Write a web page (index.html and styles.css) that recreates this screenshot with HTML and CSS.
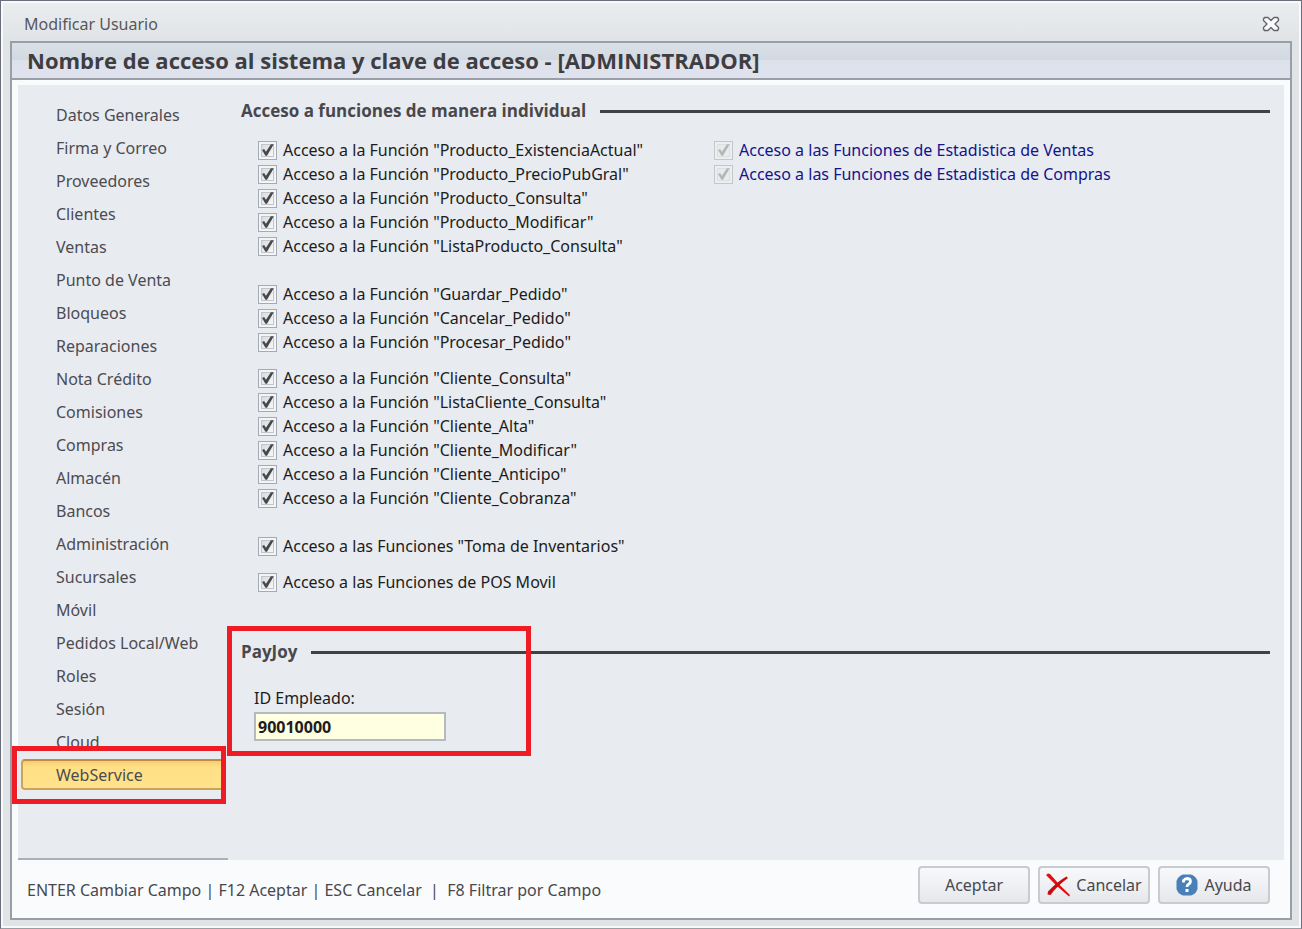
FILE: index.html
```html
<!DOCTYPE html>
<html lang="es">
<head>
    <meta charset="UTF-8">
    <meta name="viewport" content="width=device-width, initial-scale=1.0">
    <title>Modificar Usuario</title>
    <link rel="stylesheet" href="styles.css">
</head>
<body>
    <div class="window">
        <div class="title-bar">
            <span>Modificar Usuario</span>
            <button class="close" aria-label="Cerrar">
                <svg width="18" height="16" viewBox="0 0 18 16">
                    <path d="M2.500 1.500h3.500l3 3 3-3h3.500l1 1.500v1.500L13 8l3.500 3.500V13l-1 1.500H12l-3-3-3 3H2.500l-1-1.500v-1.500L5 8 1.500 4.500V3z" fill="#fafafa" stroke="#62666b" stroke-width="1.400" stroke-linejoin="round"/>
                </svg>
            </button>
        </div>

        <div class="panel">
            <h1>Nombre de acceso al sistema y clave de acceso - [ADMINISTRADOR]</h1>

            <div class="content">
                <nav class="sidebar">
                    <button>Datos Generales</button>
                    <button>Firma y Correo</button>
                    <button>Proveedores</button>
                    <button>Clientes</button>
                    <button>Ventas</button>
                    <button>Punto de Venta</button>
                    <button>Bloqueos</button>
                    <button>Reparaciones</button>
                    <button>Nota Crédito</button>
                    <button>Comisiones</button>
                    <button>Compras</button>
                    <button>Almacén</button>
                    <button>Bancos</button>
                    <button>Administración</button>
                    <button>Sucursales</button>
                    <button>Móvil</button>
                    <button>Pedidos Local/Web</button>
                    <button>Roles</button>
                    <button>Sesión</button>
                    <button>Cloud</button>
                    <div class="marked">
                        <button class="active">WebService</button>
                        <div class="highlight highlight-tab"></div>
                    </div>
                </nav>

                <main>
                    <section>
                        <h2>Acceso a funciones de manera individual</h2>
                        <div class="columns">
                            <div class="column">
                                <div class="group">
                                    <label><input type="checkbox" checked>Acceso a la Función "Producto_ExistenciaActual"</label>
                                    <label><input type="checkbox" checked>Acceso a la Función "Producto_PrecioPubGral"</label>
                                    <label><input type="checkbox" checked>Acceso a la Función "Producto_Consulta"</label>
                                    <label><input type="checkbox" checked>Acceso a la Función "Producto_Modificar"</label>
                                    <label><input type="checkbox" checked>Acceso a la Función "ListaProducto_Consulta"</label>
                                </div>
                                <div class="group group-far">
                                    <label><input type="checkbox" checked>Acceso a la Función "Guardar_Pedido"</label>
                                    <label><input type="checkbox" checked>Acceso a la Función "Cancelar_Pedido"</label>
                                    <label><input type="checkbox" checked>Acceso a la Función "Procesar_Pedido"</label>
                                </div>
                                <div class="group group-near">
                                    <label><input type="checkbox" checked>Acceso a la Función "Cliente_Consulta"</label>
                                    <label><input type="checkbox" checked>Acceso a la Función "ListaCliente_Consulta"</label>
                                    <label><input type="checkbox" checked>Acceso a la Función "Cliente_Alta"</label>
                                    <label><input type="checkbox" checked>Acceso a la Función "Cliente_Modificar"</label>
                                    <label><input type="checkbox" checked>Acceso a la Función "Cliente_Anticipo"</label>
                                    <label><input type="checkbox" checked>Acceso a la Función "Cliente_Cobranza"</label>
                                </div>
                                <div class="group group-far">
                                    <label><input type="checkbox" checked>Acceso a las Funciones "Toma de Inventarios"</label>
                                </div>
                                <div class="group group-near">
                                    <label><input type="checkbox" checked>Acceso a las Funciones de POS Movil</label>
                                </div>
                            </div>
                            <div class="column stats">
                                <label><input type="checkbox" checked disabled>Acceso a las Funciones de Estadistica de Ventas</label>
                                <label><input type="checkbox" checked disabled>Acceso a las Funciones de Estadistica de Compras</label>
                            </div>
                        </div>
                    </section>

                    <section class="payjoy">
                        <h2>PayJoy</h2>
                        <div class="field">
                            <label for="id-empleado">ID Empleado:</label>
                            <input type="text" id="id-empleado" value="90010000">
                        </div>
                        <div class="highlight highlight-payjoy"></div>
                    </section>
                </main>
            </div>

            <footer>
                <p>ENTER Cambiar Campo | F12 Aceptar | ESC Cancelar &nbsp;|&nbsp; F8 Filtrar por Campo</p>
                <div class="actions">
                    <button>Aceptar</button>
                    <button>
                        <svg width="24" height="24" viewBox="0 0 24 24">
                            <path d="M0 2L2 .5 4 1Q13 12 24 22l-1 1.500Q11 14 0 2z" fill="#e01010"/>
                            <path d="M20.500 3.500L22 5Q11 13 4.500 22L1.500 21.500 2 18.500Q12 8 20.500 3.500z" fill="#c80c0c"/>
                        </svg>
                        Cancelar
                    </button>
                    <button>
                        <svg width="22" height="22" viewBox="0 0 22 22">
                            <path d="M7 .5h8Q20 2 21.500 7v8Q20 20 15 21.500H7Q2 20 .5 15V7Q2 2 7 .5z" fill="#4a80b9"/>
                            <path d="M7.500 8.500V6.500Q9 4.500 11.500 4.500 14.500 4.800 14.500 7.500 14.500 9.300 12.500 10.300 11 11 11 13" fill="none" stroke="#fff" stroke-width="2.800"/>
                            <path d="M9.500 15h3v3h-3z" fill="#fff"/>
                        </svg>
                        Ayuda
                    </button>
                </div>
            </footer>
        </div>
    </div>
</body>
</html>
```
FILE: styles.css
```css
* {
    box-sizing: border-box;
}
body {
    margin: 0;
    font-family: "Noto Sans", "Open Sans", sans-serif;
    font-size: 16px;
    line-height: 24px;
    color: #1c1c20;
}
h1, h2, p {
    margin: 0;
}
h1, h2 {
    font-family: "Open Sans", "Noto Sans", sans-serif;
}
button, input {
    margin: 0;
    font-family: inherit;
    font-size: inherit;
}

/* Window frame */
.window {
    display: flex;
    flex-direction: column;
    min-height: 100vh;
    padding: 0 9px 8px;
    border: 1px solid #6a6f7b;
    border-bottom-color: #9a9da2;
    box-shadow: inset 0 0 0 2px #f8f9fa;
    background: linear-gradient(#ebedf0, #e0e4e6 40px);
}
.title-bar {
    display: flex;
    justify-content: space-between;
    align-items: center;
    height: 40px;
    padding: 6px 12px 0 14px;
    color: #57575b;
}
.close {
    display: flex;
    padding: 0;
    border: none;
    background: none;
}
.panel {
    display: flex;
    flex: 1;
    flex-direction: column;
    border: 2px solid #9a9fa7;
    background: #fafbfd;
}
h1 {
    padding: 0 15px;
    border-bottom: 2px solid #9a9fa7;
    background: linear-gradient(#dae0e8, #d1d9e1 50%, #dde1ea 50%, #e0e3ee);
    color: #3e3e42;
    font-size: 22px;
    line-height: 35px;
}

/* Tabs and page */
.content {
    display: flex;
    flex: 1;
    margin: 5px 6px 0;
    background: #e8ebf0;
}
.sidebar {
    display: flex;
    flex-direction: column;
    gap: 2px;
    width: 210px;
    padding: 14px 3px 16px;
    border-bottom: 2px solid #aab0b8;
}
.sidebar button {
    width: 100%;
    height: 31px;
    padding: 0 0 0 34px;
    border: 1px solid transparent;
    background: none;
    color: #4c4c50;
    text-align: left;
}
.marked {
    position: relative;
}
.sidebar .active {
    display: block;
    border: 2px solid #cda455;
    border-top-color: #c18b43;
    border-radius: 4px;
    padding-left: 33px;
    background: linear-gradient(#f4cd73, #ffe087 6px, #ffe28a);
}
.highlight {
    position: absolute;
    border: 5px solid #ee1c25;
    pointer-events: none;
}
.highlight-tab {
    inset: -13px -1px -14px -9px;
}
main {
    flex: 1;
    padding: 14px 14px 0 13px;
}
h2 {
    display: flex;
    align-items: center;
    gap: 14px;
    color: #48484c;
    font-size: 17px;
    line-height: 24px;
}
h2::after {
    content: "";
    flex: 1;
    height: 3px;
    background: #414144;
}

/* Check boxes */
.columns {
    display: flex;
    padding: 15px 0 0 17px;
}
.column {
    width: 456px;
}
.group-far {
    margin-top: 24px;
}
.group-near {
    margin-top: 12px;
}
.columns label {
    display: flex;
    align-items: center;
    gap: 6px;
    height: 24px;
    white-space: nowrap;
}
.stats {
    color: #14148c;
}
input[type="checkbox"] {
    position: relative;
    width: 19px;
    height: 19px;
    appearance: none;
    border: 1px solid #a3abb6;
    background: #f3f4f6;
}
input[type="checkbox"]::before {
    content: "";
    position: absolute;
    inset: 2px;
    border: 1px solid #c2c6cb;
    background: linear-gradient(135deg, #d9dcdf, #f6f6f6);
}
input[type="checkbox"]:checked::after {
    content: "";
    position: absolute;
    inset: 2px;
    background: #45484c;
    clip-path: polygon(8% 50%, 24% 42%, 38% 64%, 76% 6%, 98% 6%, 46% 94%, 34% 94%);
}
input[type="checkbox"]:disabled {
    border-color: #c3c7cc;
    background: #eceef0;
}
input[type="checkbox"]:disabled::before {
    border-color: #dcdee0;
    background: #e9ebed;
}
input[type="checkbox"]:disabled::after {
    background: #b4b7ba;
}

/* PayJoy */
.payjoy {
    position: relative;
    margin-top: 46px;
}
.field {
    display: flex;
    flex-direction: column;
    align-items: flex-start;
    padding: 22px 0 0 13px;
}
.field input {
    width: 192px;
    height: 29px;
    margin-top: 2px;
    padding: 0 2px;
    border: 2px solid #b5bac0;
    background: #ffffe1;
    color: #1c1c20;
    font-weight: bold;
}
.highlight-payjoy {
    top: -14px;
    left: -14px;
    width: 304px;
    height: 130px;
}

/* Footer */
footer {
    display: flex;
    justify-content: space-between;
    padding: 6px 20px 14px 15px;
    color: #48484c;
}
footer p {
    padding-top: 12px;
}
.actions {
    display: flex;
    gap: 8px;
}
.actions button {
    display: flex;
    justify-content: center;
    align-items: center;
    gap: 6px;
    width: 112px;
    height: 38px;
    padding: 0 2px;
    border: 2px solid #c8cbcf;
    border-radius: 4px;
    background: linear-gradient(#f8f9fb, #e5e8eb);
    color: #48484c;
}
```
